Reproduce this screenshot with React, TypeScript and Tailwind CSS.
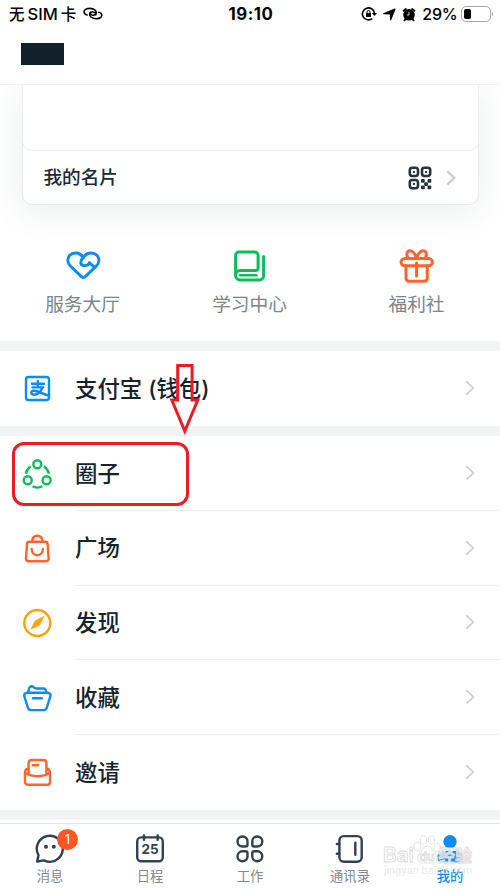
import React from 'react';

interface IconProps {
  children: React.ReactNode;
  className?: string;
  size?: number;
  stroke?: number;
}

const Icon: React.FC<IconProps> = ({ children, className = '', size = 30, stroke = 2.4 }) => (
  <svg
    width={size}
    height={size}
    viewBox={`0 0 ${size} ${size}`}
    fill="none"
    stroke="currentColor"
    strokeWidth={stroke}
    strokeLinecap="round"
    strokeLinejoin="round"
    className={`block shrink-0 ${className}`}
  >
    {children}
  </svg>
);

const Chevron = ({ className = '' }: { className?: string }) => (
  <svg width="10" height="16" viewBox="0 0 10 16" fill="none" stroke="currentColor" className={className}>
    <path d="M1.3 1.3 8.3 8l-7 6.7" />
  </svg>
);

const StatusBar = () => (
  <div className="h-7 flex items-center justify-between pl-[9px] pr-[7px] text-black">
    <div className="flex-1 flex items-center">
      <span className="text-[15.5px] leading-7 font-medium whitespace-nowrap">
        无<span className="text-[16.5px] mx-[3px]">SIM</span>卡
      </span>
      <svg width="20" height="14" viewBox="0 0 20 14" fill="none" stroke="currentColor" strokeWidth="1.6" strokeLinecap="round" className="ml-[7px]">
        <path d="M4.2 8C1 7.5.3 4.6 2 2.8c2-2 7.5-1.9 10 .2 2.8 2.7.6 5.4-2 5.2-2.1-.2-3.2-1.4-2.7-2.7" />
        <path d="M15.8 5.2c3.2.6 3.7 3.6 2 5.2-2.3 2-7.4 1.7-9.8-.4-2.800-2.700-.5-5.500 2-5.100 2.100.2 3.200 1.400 2.700 2.700" />
      </svg>
    </div>
    <span className="font-bold text-[16.8px] tracking-[0.5px] leading-7">19:10</span>
    <div className="flex-1 flex items-center justify-end">
      <svg width="16" height="16" viewBox="0 0 16 16" fill="none" stroke="currentColor" strokeWidth="1.6">
        <path d="M11.2 12.6A6 6 0 1 1 13.4 7" />
        <path d="M11 7h5l-2.5 3z" fill="currentColor" stroke="none" />
        <rect x="5" y="7" width="5" height="4" rx=".5" fill="currentColor" stroke="none" />
        <path d="M6 7.3V6a1.5 1.5 0 0 1 3 0v1.3" strokeWidth="1" />
      </svg>
      <svg width="13" height="13" viewBox="0 0 13 13" fill="currentColor" className="ml-[6px]">
        <path d="M.3 6.2Q-.2 5.400.9 5L11.6.5Q12.900.1 12.500 1.400L8.200 12Q7.600 13 7.100 12L6.800 6.500z" />
      </svg>
      <svg width="14" height="15" viewBox="0 0 14 15" fill="currentColor" className="ml-[6px]">
        <circle cx="7" cy="7.8" r="5.8" />
        <path d="M1 4.2 4.5 1.5M13 4.2 9.5 1.5M3.5 12l-1.400 2M10.500 12l1.400 2" stroke="currentColor" strokeWidth="1.8" />
        <path d="M7 4.800V8H4.800" fill="none" stroke="white" strokeWidth="0.800" />
      </svg>
      <span className="text-[16px] leading-7 font-medium ml-[6px] -tracking-[0.2px]">29%</span>
      <div className="ml-[3px] w-[30px] h-4 rounded-[5px] border-[1.5px] border-[#a9a9a9] p-[2px]">
        <div className="w-[7px] h-full bg-black rounded-[2px]" />
      </div>
      <div className="w-[1.5px] h-1 bg-[#a9a9a9] ml-px rounded-r" />
    </div>
  </div>
);

const QrIcon = () => (
  <svg width="24" height="24" viewBox="0 0 24 24" fill="none" stroke="currentColor" strokeWidth="2.6" className="text-[#27343f]">
    <rect x="1.8" y="1.8" width="8.2" height="8.2" rx="2.4" />
    <rect x="14" y="1.8" width="8.2" height="8.2" rx="2.4" />
    <rect x="1.8" y="14" width="8.2" height="8.2" rx="2.4" />
    <path d="M4.9 5.9h2M17.1 5.9h2M4.9 18.1h2" strokeWidth="2" />
    <g fill="currentColor" stroke="none">
      <rect x="13" y="13" width="3.800" height="3.800" rx="1" />
      <rect x="19.5" y="13" width="3.800" height="3.800" rx="1" />
      <rect x="16.200" y="16.200" width="3.800" height="3.800" rx="1" />
      <rect x="13" y="19.500" width="3.800" height="3.800" rx="1" />
      <rect x="19.500" y="19.500" width="3.800" height="3.800" rx="1" />
    </g>
  </svg>
);

const ProfileCard = () => (
  <div className="h-[163px] overflow-hidden px-[21.5px]">
    <div className="h-[119.5px] bg-white border border-t-0 border-[#e9ebeb] rounded-b-[10px] shadow-[0_6px_36px_rgba(30,60,50,0.09)]">
      <div className="h-[66px] -mx-px border border-t-0 border-[#eceeee] rounded-b-[10px]" />
      <div className="h-[53px] flex items-center pl-[21px] pr-[22px]">
        <span className="flex-1 text-[18.6px] font-medium text-[#1d2a35] pt-px">我的名片</span>
        <QrIcon />
        <Chevron className="ml-[14px] text-[#cbced3] stroke-[2.4]" />
      </div>
    </div>
  </div>
);

const shortcuts = [
  {
    label: '服务大厅',
    color: 'text-[#0a8cff]',
    icon: (
      <>
        <path d="M18.3 9.4C15 4.3 8.4 3.5 4.8 7.2 1.8 10.6 2.4 15 5.4 18l11 10.6q1.9 1.6 3.8 0L31.3 18c3-3 3.6-7.5.6-10.8C28.2 3.5 21.8 4.3 18.3 9.4z" />
        <path d="M18.3 9.4c-3.6 3.5-3.1 7.6.2 8.2 1.5.2 2.5-.5 3.2-.3 1.3 0 2-1 2.6-2.6l5 4.5" />
      </>
    ),
  },
  {
    label: '学习中心',
    color: 'text-[#0bbf57]',
    icon: (
      <>
        <path d="M3.6 28V7.3a3.300 3.300 0 0 1 3.300-3.300H22.800a3.300 3.300 0 0 1 3.300 3.300V20a2.500 2.500 0 0 1-2.500 2.500H8.100C5.400 22.500 3.600 24.500 3.600 27.200s1.800 4.800 4.500 4.800h19.300a4.200 4.200 0 0 0 4.200-4.200V8.500" />
        <path d="M8 27.200h16.500" strokeWidth="2.400" />
      </>
    ),
  },
  {
    label: '福利社',
    color: 'text-[#ff642f]',
    icon: (
      <>
        <rect x="2" y="10.4" width="31.4" height="7.4" rx="3.7" />
        <path d="M7 17.8v12.5a3 3 0 0 0 3 3h15.3a3 3 0 0 0 3-3V17.8M17.6 15v13" />
        <path d="M17.6 10.2C16 5.8 13.7 2.6 11 2.8 7.8 3 7 6.3 9 10.2M17.6 10.2c1.6-4.4 3.9-7.6 6.6-7.4 3.2.2 4 3.5 2 7.4" />
      </>
    ),
  },
];

interface Item {
  label: string;
  color: string;
  icon: React.ReactNode;
}

const alipay: Item = {
  label: '支付宝 (钱包)',
  color: 'text-[#0a8cff]',
  icon: (
    <>
      <rect x="4" y="4" width="23" height="23" rx="2.5" />
      <path d="M10 10.700h12M15.800 8v6M10.500 14.400h10.700M20.300 14.800c-1.400 3.600-4.600 6.900-8.200 6.900-3.700 0-3.800-3.800-.2-4 3.800-.1 8 3 14.600 5" />
    </>
  ),
};

const items: Item[] = [
  {
    label: '圈子',
    color: 'text-[#0bbf57]',
    icon: (
      <>
        <circle cx="15.3" cy="5.3" r="4" />
        <circle cx="5.7" cy="21.3" r="4" />
        <circle cx="24.6" cy="21.3" r="4" />
        <path d="M8.700 7.200c-2.600 1.900-4.300 4.200-4.900 7.500M21.900 7.200c2.600 1.900 4.400 4.200 5 7.500M10.500 27.300c3 1.600 6.800 1.600 9.800 0" strokeLinecap="butt" />
      </>
    ),
  },
  {
    label: '广场',
    color: 'text-[#ff642f]',
    icon: (
      <>
        <path d="M7.300 8.700h16a2.300 2.300 0 0 1 2.300 2.200L26.600 25.500a2.600 2.600 0 0 1-2.600 2.800H6.600a2.600 2.600 0 0 1-2.600-2.800L5 10.900a2.300 2.300 0 0 1 2.300-2.200z" />
        <path d="M10 8.300c.3-3.500 2.500-5.600 5.300-5.600s5 2.100 5.300 5.600M9.700 16c0 3.800 2.400 6.200 5.600 6.200s5.600-2.400 5.600-6.200" />
      </>
    ),
  },
  {
    label: '发现',
    color: 'text-[#ffa00e]',
    icon: (
      <>
        <circle cx="15.3" cy="15" r="13" />
        <path d="M21.8 8.6 17.8 17 9 21.3l4-8.4z" fill="currentColor" strokeWidth="0.6" />
      </>
    ),
  },
  {
    label: '收藏',
    color: 'text-[#0a8cff]',
    icon: (
      <>
        <path d="M5 9.7h20.7c1.9 0 3.2 1.7 2.7 3.5l-3.7 11.7a3.3 3.3 0 0 1-3.1 2.2H9a3.3 3.3 0 0 1-3.1-2.2L2.300 13.200C1.800 11.400 3.100 9.700 5 9.700z" />
        <path d="M6.1 9.400 7.200 5q.5-1.700 2.200-1.800c2.400 0 2.400 2.200 4.800 2.300h7.400q1.600 0 2.100 1.500l.8 2.400M11 15.300h8.800" />
      </>
    ),
  },
  {
    label: '邀请',
    color: 'text-[#ff642f]',
    icon: (
      <>
        <path d="M6.6 17.600V5.800A2.800 2.800 0 0 1 9.400 3h12.200a2.800 2.800 0 0 1 2.800 2.800v11.800M6.400 11.200C4.200 11.800 3 13.500 3 16v9a2.700 2.700 0 0 0 2.700 2.700h19.600A2.700 2.700 0 0 0 28 25v-9c0-2.500-1.200-4.200-3.400-4.800" />
        <path d="M3 15.800c7 4.500 18 4.500 25 0M10.800 8.200h5.500" />
      </>
    ),
  },
];

const Row = ({ item, last }: { item: Item; last?: boolean }) => (
  <div className="h-[74.7px] flex items-center pl-[22px]">
    <Icon className={item.color}>{item.icon}</Icon>
    <div className={`flex-1 h-full ml-[23px] pr-[25px] flex items-center justify-between ${last ? '' : 'border-b border-[#eceeef]'}`}>
      <span className="text-[22.4px] font-medium text-[#16232e] pt-px">{item.label}</span>
      <Chevron className="text-[#c9ccd1] stroke-[1.6]" />
    </div>
  </div>
);

const tabs = [
  {
    label: '消息',
    badge: 1,
    icon: (
      <>
        <path d="M4.5 22.2A13 13 0 1 1 10 27.4L3.2 28.5z" />
        <circle cx="12" cy="13.8" r="2" fill="currentColor" stroke="none" />
        <circle cx="19.8" cy="13.8" r="2" fill="currentColor" stroke="none" />
      </>
    ),
  },
  {
    label: '日程',
    icon: (
      <>
        <rect x="3.2" y="4.400" width="25.600" height="23.800" rx="4" />
        <path d="M10 2.500v4.300M23.700 2.500v4.300" strokeWidth="2.500" />
        <text x="16" y="21.200" textAnchor="middle" fill="currentColor" stroke="none" fontSize="13.500" fontWeight="700">25</text>
      </>
    ),
  },
  {
    label: '工作',
    icon: (
      <>
        <path d="M8.500 3.500A5 5 0 0 0 8.500 13.500H11.500Q13.500 13.500 13.500 11.500V8.500A5 5 0 0 0 8.500 3.500z" />
        <path d="M23.300 3.500A5 5 0 0 1 23.300 13.500H20.300Q18.300 13.500 18.300 11.500V8.500A5 5 0 0 1 23.300 3.500z" />
        <path d="M8.500 28.300A5 5 0 0 1 8.500 18.300H11.500Q13.500 18.300 13.500 20.300V23.300A5 5 0 0 1 8.500 28.300z" />
        <path d="M23.300 28.300A5 5 0 0 0 23.300 18.300H20.300Q18.300 18.300 18.300 20.300V23.300A5 5 0 0 0 23.300 28.300z" />
      </>
    ),
  },
  {
    label: '通讯录',
    icon: (
      <>
        <rect x="5.400" y="3.100" width="22.300" height="25.600" rx="4.500" />
        <path d="M2.900 11h2.500M2.900 20.700h2.500M21.300 9.800v12" />
      </>
    ),
  },
  {
    label: '我的',
    active: true,
    icon: (
      <g fill="currentColor" stroke="none">
        <circle cx="16" cy="8.7" r="6.7" />
        <path d="M3.3 24c0-4.5 5-6.2 12.7-6.2S28.700 19.500 28.700 24c0 3.800-2 5.600-5 5.600H8.300c-3 0-5-1.800-5-5.600z" />
      </g>
    ),
  },
];

const TabBar = () => (
  <nav className="flex-1 bg-white border-t border-[#e3e4e6] grid grid-cols-5">
    {tabs.map((tab) => (
      <div key={tab.label} className={`relative flex flex-col items-center pt-[9px] ${tab.active ? 'text-[#0a8cff]' : 'text-[#33424f]'}`}>
        <Icon size={32} stroke={2.4}>{tab.icon}</Icon>
        <span className={`text-[13.3px] leading-5 mt-[1px] ${tab.active ? 'font-medium' : 'text-[#818991]'}`}>{tab.label}</span>
        {tab.badge && (
          <span className="absolute left-[57px] top-[5px] w-[21px] h-[21px] rounded-full bg-[#ff5722] text-white text-[13px] leading-[21px] text-center">
            {tab.badge}
          </span>
        )}
      </div>
    ))}
  </nav>
);

const Watermark = () => (
  <div className="absolute left-[383px] top-[834px] w-[92px] h-[46px] pointer-events-none">
    <svg width="92" height="46" viewBox="0 0 92 46" fill="white" fillOpacity="0.75" stroke="#dcdcdc" strokeWidth="0.9">
      <ellipse cx="34.5" cy="12.5" rx="3.4" ry="4.3" />
      <ellipse cx="40.5" cy="6" rx="3.2" ry="4.3" />
      <ellipse cx="48.5" cy="6" rx="3.2" ry="4.3" />
      <ellipse cx="54" cy="13.5" rx="3" ry="4.2" />
      <path d="M44.5 12c4 0 5 4 7.5 7 4 4 3 10-2.500 10-3 0-7 0-10 0-5.500 0-6.500-6-2.500-10 2.500-3 3.500-7 7.500-7z" />
      <text x="0" y="28" fontSize="20" fontWeight="600" textLength="31" lengthAdjust="spacingAndGlyphs">Bai</text>
      <text x="36.500" y="26.500" fontSize="12" fontWeight="600">du</text>
      <text x="55" y="28" fontSize="17" fontWeight="700">经验</text>
      <text x="1" y="39.500" fontSize="10" textLength="88" fill="#e0e0e0" stroke="none">jingyan.baidu.com</text>
    </svg>
  </div>
);

const App: React.FC = () => {
  return (
    <div className="relative w-[500px] h-[889px] overflow-hidden bg-white flex flex-col font-['Inter','Noto_Sans_CJK_SC',sans-serif]">
      <header className="h-[85px] shrink-0 border-b border-[#f0f1f1]">
        <StatusBar />
        <div className="ml-[21px] mt-[14.5px] w-[43px] h-[22px] bg-[#11212c]" />
      </header>

      <div className="h-[256px] shrink-0">
        <ProfileCard />
        <div className="flex justify-around -ml-px">
          {shortcuts.map((s) => (
            <div key={s.label} className="flex-1 flex flex-col items-center">
              <Icon size={36} stroke={3} className={s.color}>{s.icon}</Icon>
              <span className="text-[18.7px] leading-7 mt-[7px] text-[#7c848c]">{s.label}</span>
            </div>
          ))}
        </div>
      </div>

      <div className="h-[10px] shrink-0 bg-[#f2f3f5]" />
      <Row item={alipay} last />
      <div className="h-[10.5px] shrink-0 bg-[#f2f3f5]" />
      {items.map((item, i) => (
        <Row key={item.label} item={item} last={i === items.length - 1} />
      ))}
      <div className="h-[10px] shrink-0 bg-[#f2f3f5]" />
      <div className="h-[3px] shrink-0" />
      <TabBar />

      <Watermark />
      <div className="absolute left-[12px] top-[442px] w-[177px] h-[64px] border-[3px] border-[#ed1c24] rounded-[12px]" />
      <svg width="32" height="74" viewBox="0 0 32 74" fill="none" stroke="#ed1c24" strokeWidth="3" className="absolute left-[169px] top-[362px]">
        <path d="M8.7 3.5h14.4v34.500h5.700L15.800 69 2.800 38h5.900z" />
      </svg>
    </div>
  );
};

export default App;
